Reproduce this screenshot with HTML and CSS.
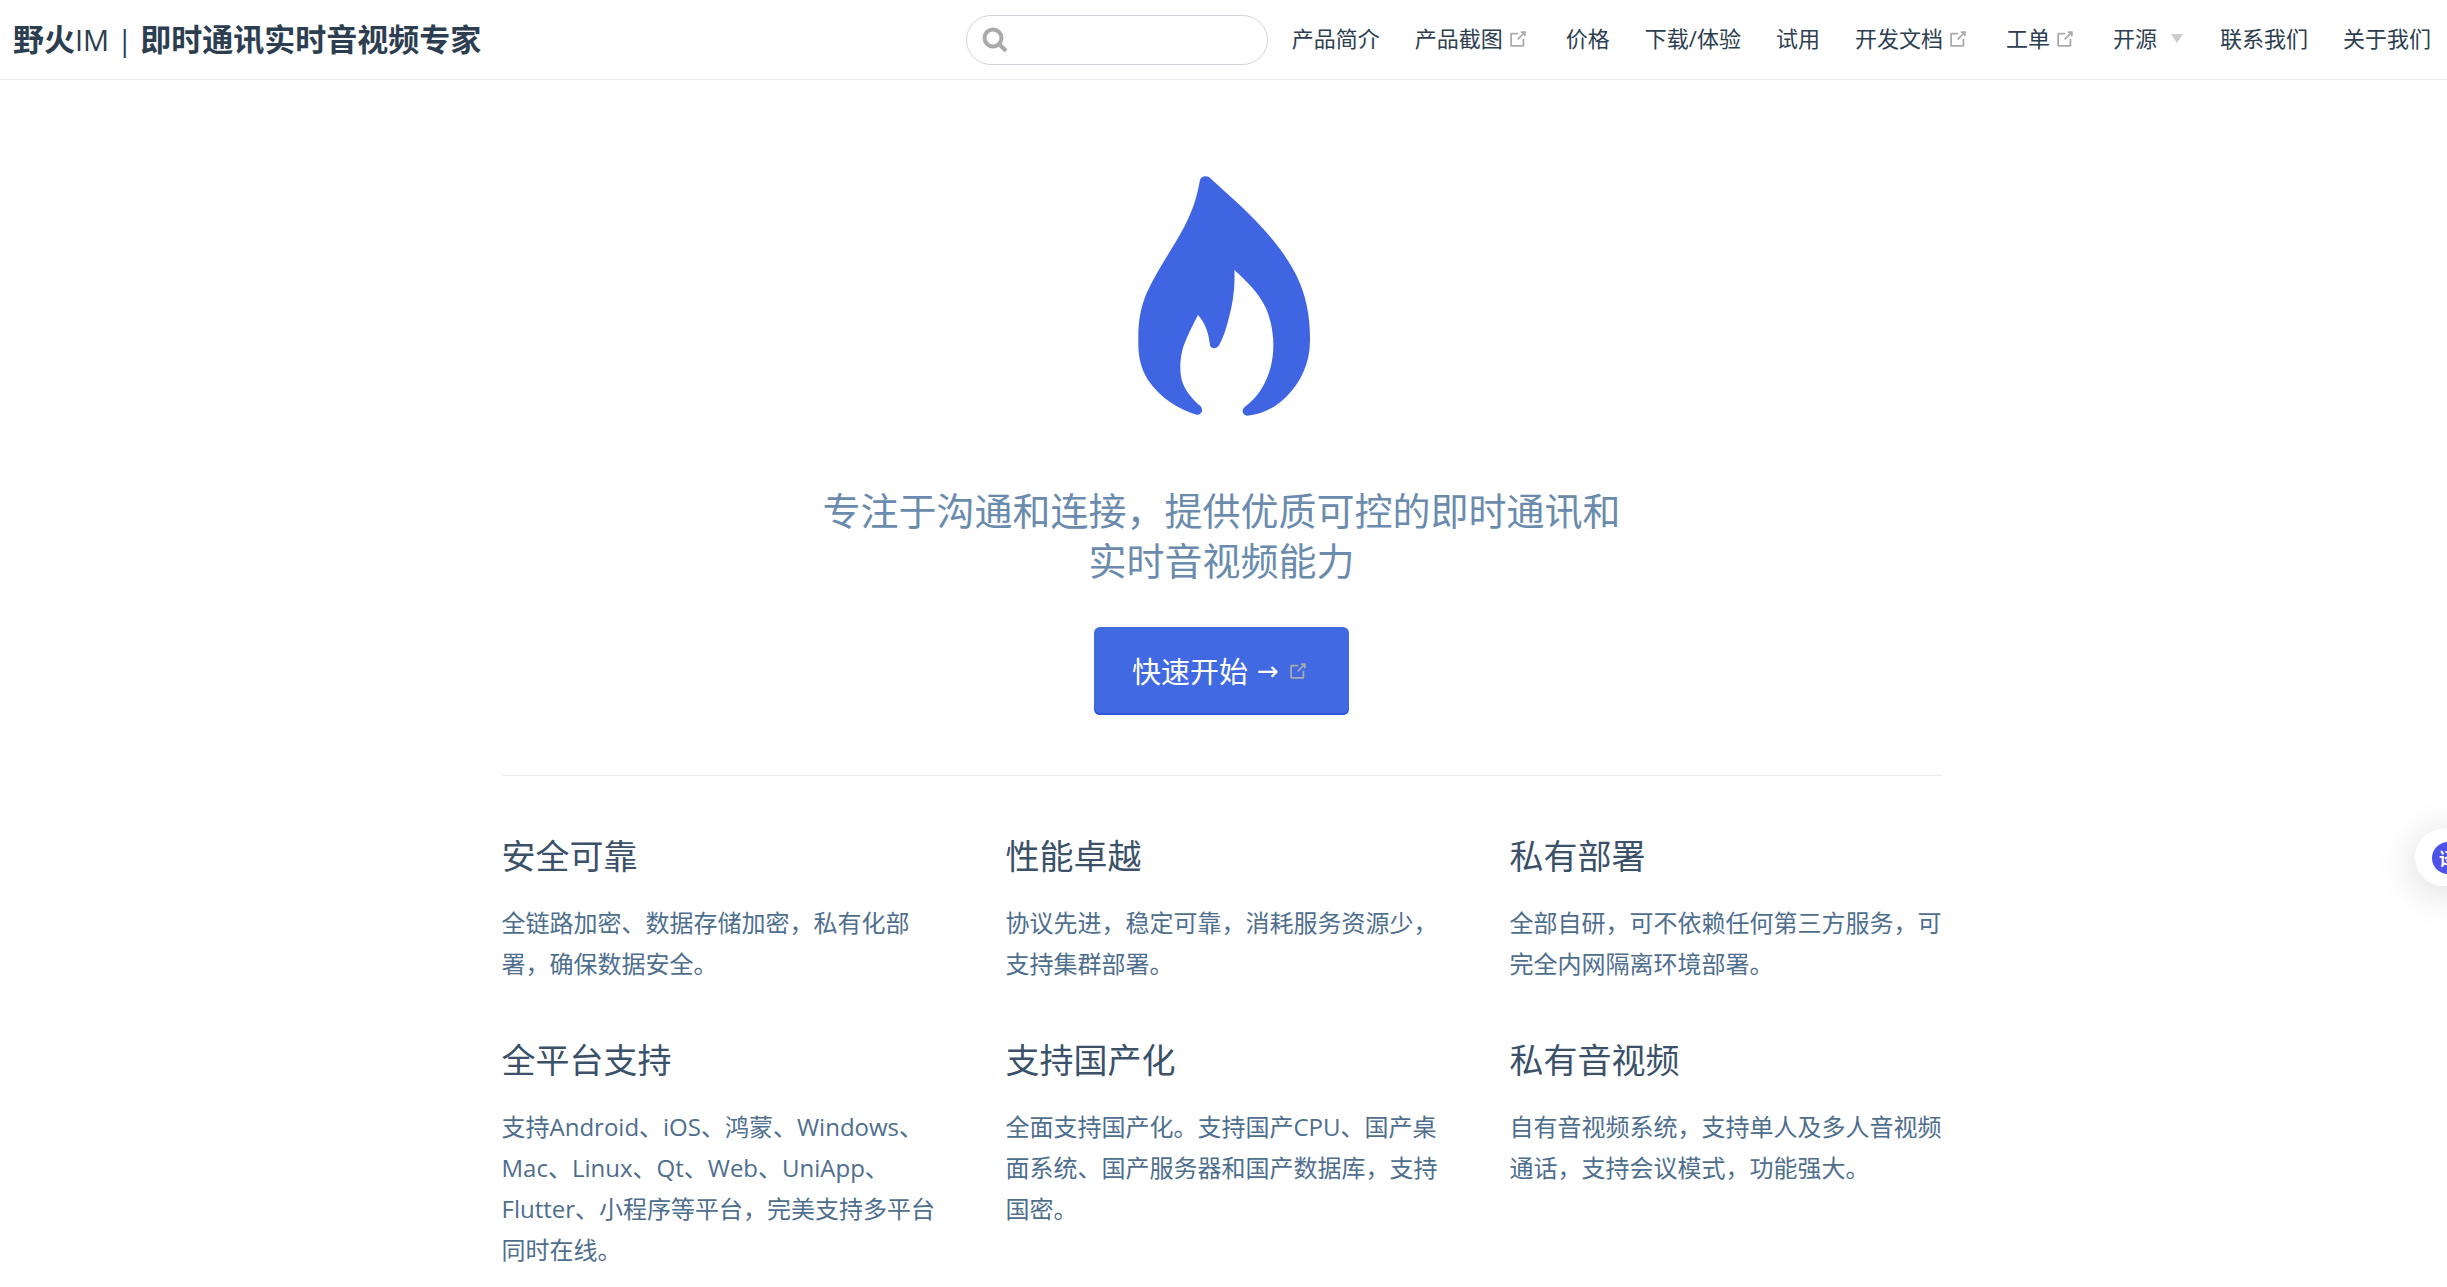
FILE: index.html
```html
<!DOCTYPE html>
<html lang="zh-CN">
<head>
<meta charset="utf-8">
<meta name="viewport" content="width=device-width, initial-scale=1">
<title>野火IM | 即时通讯实时音视频专家</title>
<link rel="stylesheet" href="styles.css">
</head>
<body>
<svg class="sprite" aria-hidden="true">
  <symbol id="outbound" viewBox="0 0 100 100">
    <path d="M18.8,85.1h56l0,0c2.2,0,4-1.8,4-4v-32h-8v28h-48v-48h28v-8h-32l0,0c-2.2,0-4,1.8-4,4v56C14.8,83.3,16.6,85.1,18.8,85.1z"/>
    <polygon points="45.7,48.7 51.3,54.3 77.2,28.5 77.2,37.2 85.2,37.2 85.2,14.9 62.8,14.9 62.8,22.9 71.5,22.9"/>
  </symbol>
</svg>

<header class="navbar">
  <a class="brand" href="#">野火<span class="brand-latin">IM | </span>即时通讯实时音视频专家</a>
  <form class="search" role="search">
    <svg class="search-icon" viewBox="0 0 26 26" aria-hidden="true"><circle cx="11" cy="11" r="8.5"/><path d="M17 17l7 7"/></svg>
    <input class="search-input" type="search" aria-label="搜索">
  </form>
  <nav class="links">
    <a href="#">产品简介</a>
    <a href="#">产品截图<svg class="outbound"><use href="#outbound"/></svg></a>
    <a href="#">价格</a>
    <a href="#">下载/体验</a>
    <a href="#">试用</a>
    <a href="#">开发文档<svg class="outbound"><use href="#outbound"/></svg></a>
    <a href="#">工单<svg class="outbound"><use href="#outbound"/></svg></a>
    <button class="dropdown" type="button">开源<span class="caret"></span></button>
    <a href="#">联系我们</a>
    <a href="#">关于我们</a>
  </nav>
</header>

<main class="home">
  <section class="hero">
    <svg class="flame" viewBox="0 0 660 870" role="img" aria-label="野火IM">
      <path d="M264 90Q270 74 291 81C330 118 372 152 414 195C470 250 522 313 554 378C582 435 595 500 594 570C594 640 567 696 523 740C490 773 448 795 405 797C389 795 388 777 399 770C440 741 463 699 477 648C490 590 485 530 462 475C441 429 405 395 367 360C370 410 363 460 349 510C340 545 330 571 319 589C312 597 297 597 294 586C290 548 279 518 258 495C244 523 226 556 214 590C203 625 202 665 211 696C222 726 244 750 265 768C276 779 268 796 253 794C197 777 144 743 108 690C86 655 78 617 79 575C78 520 84 477 104 429C135 360 181 298 216 232C243 181 255 140 264 90Z"/>
    </svg>
    <p class="description">专注于沟通和连接，提供优质可控的即时通讯和实时音视频能力</p>
    <a class="action" href="#">快速开始<span class="arrow">→</span><svg class="outbound"><use href="#outbound"/></svg></a>
  </section>

  <section class="features">
    <article class="feature">
      <h2>安全可靠</h2>
      <p>全链路加密、数据存储加密，私有化部署，确保数据安全。</p>
    </article>
    <article class="feature">
      <h2>性能卓越</h2>
      <p>协议先进，稳定可靠，消耗服务资源少，支持集群部署。</p>
    </article>
    <article class="feature">
      <h2>私有部署</h2>
      <p>全部自研，可不依赖任何第三方服务，可完全内网隔离环境部署。</p>
    </article>
    <article class="feature">
      <h2>全平台支持</h2>
      <p>支持Android、iOS、鸿蒙、Windows、Mac、Linux、Qt、Web、UniApp、Flutter、小程序等平台，完美支持多平台同时在线。</p>
    </article>
    <article class="feature">
      <h2>支持国产化</h2>
      <p>全面支持国产化。支持国产CPU、国产桌面系统、国产服务器和国产数据库，支持国密。</p>
    </article>
    <article class="feature">
      <h2>私有音视频</h2>
      <p>自有音视频系统，支持单人及多人音视频通话，支持会议模式，功能强大。</p>
    </article>
  </section>
</main>

<button class="translate" type="button" aria-label="翻译"><span class="translate-badge">译</span></button>
</body>
</html>
```
FILE: styles.css
```css
* {
  box-sizing: border-box;
}

body {
  margin: 0;
  overflow-x: hidden;
  background: #fff;
  color: #2c3e50;
  font-family: "Open Sans", "Noto Sans CJK SC", sans-serif;
  font-size: 24px;
  line-height: 41px;
}

a {
  color: inherit;
  text-decoration: none;
}

.sprite {
  position: absolute;
  width: 0;
  height: 0;
}

/* Top bar */
.navbar {
  display: flex;
  align-items: center;
  height: 80px;
  padding: 0 16px 0 13px;
  border-bottom: 1px solid #eaecef;
}

.brand {
  margin-right: auto;
  font-size: 31px;
  font-weight: 700;
  white-space: nowrap;
}

.brand-latin {
  font-size: 29px;
  font-weight: 400;
}

.search {
  display: flex;
  align-items: center;
  width: 302px;
  height: 50px;
  margin-right: 24px;
  padding: 0 15px;
  border: 1px solid #cfd4db;
  border-radius: 25px;
}

.search-icon {
  flex: none;
  width: 26px;
  height: 26px;
  fill: none;
  stroke: #aaa;
  stroke-width: 4;
}

.search-input {
  flex: 1;
  min-width: 0;
  padding: 0 8px;
  border: 0;
  outline: 0;
  background: transparent;
  color: #4e6e8e;
  font: inherit;
  font-size: 22px;
}

.links {
  display: flex;
  align-items: center;
  gap: 35px;
  padding-bottom: 2px;
  font-size: 22px;
  white-space: nowrap;
}

.links a,
.dropdown {
  display: flex;
  align-items: center;
}

.dropdown {
  padding: 0;
  border: 0;
  background: none;
  color: inherit;
  font: inherit;
}

.outbound {
  width: 22px;
  height: 22px;
  margin: 0 2px 0 4px;
  fill: #aaa;
}

.caret {
  margin: 0 2px 0 14px;
  border: 6px solid transparent;
  border-top: 9px solid #ccc;
  border-bottom: 0;
}

/* Home page */
.home {
  max-width: 1444px;
  margin: 0 auto;
  padding: 0 4px 16px 0;
}

.hero {
  display: flex;
  flex-direction: column;
  align-items: center;
  padding: 70px 0 60px;
  text-align: center;
}

.flame {
  width: 220px;
  height: 290px;
  fill: #4065e2;
}

.description {
  max-width: 820px;
  margin: 45px 0 42px;
  color: #6a8bad;
  font-size: 38px;
  line-height: 50px;
}

.action {
  display: flex;
  align-items: center;
  height: 88px;
  padding: 0 38px;
  border-radius: 6px;
  background: #4169e1;
  box-shadow: inset 0 -2px #3157dc;
  color: #fff;
  font-size: 29px;
}

.arrow {
  margin-left: 9px;
  font-family: "DejaVu Sans", sans-serif;
  font-size: 26px;
}

.action .outbound {
  margin-left: 8px;
}

.features {
  display: grid;
  grid-template-columns: repeat(3, 1fr);
  gap: 54px 72px;
  padding-top: 58px;
  border-top: 1px solid #eaecef;
}

.feature h2 {
  margin: 0 0 24px;
  color: #3a5169;
  font-size: 34px;
  font-weight: 400;
  line-height: 44px;
}

.feature p {
  margin: 0 -10px 0 0;
  color: #4e6e8e;
}

/* Translate button docked to the window's edge */
.translate {
  position: fixed;
  top: 829px;
  right: -28px;
  display: flex;
  align-items: center;
  width: 60px;
  height: 57px;
  padding: 0 0 0 17px;
  border: 0;
  border-radius: 29px;
  background: #fff;
  box-shadow: 0 6px 40px rgba(0, 0, 0, 0.16);
}

.translate-badge {
  flex: none;
  width: 32px;
  height: 32px;
  border-radius: 50%;
  background: #4d53e8;
  color: #fff;
  font: 700 18px/32px "Noto Sans CJK SC", sans-serif;
  text-align: center;
}
```
